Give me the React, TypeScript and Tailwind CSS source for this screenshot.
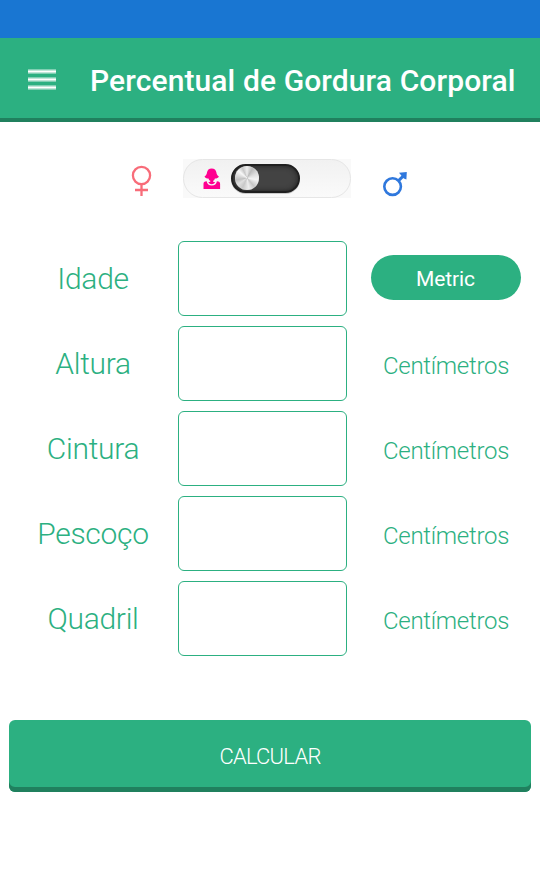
const rows = [
  { label: "Idade", unit: null },
  { label: "Altura", unit: "Centímetros" },
  { label: "Cintura", unit: "Centímetros" },
  { label: "Pescoço", unit: "Centímetros" },
  { label: "Quadril", unit: "Centímetros" },
];

function MenuIcon() {
  return (
    <svg className="mt-[4px]" width="28" height="22" viewBox="0 0 28 22" fill="#fff" shapeRendering="crispEdges">
      {[0, 8, 16].map((y) => (
        <g key={y}>
          <rect y={y} width="28" height="1" opacity="0.4" />
          <rect y={y + 1} width="28" height="3" opacity="0.7" />
          <rect y={y + 2} width="28" height="1" />
          <rect y={y + 4} width="28" height="1" opacity="0.4" />
        </g>
      ))}
    </svg>
  );
}

function Female() {
  return (
    <svg width="22" height="32" viewBox="0 0 22 32" fill="none" stroke="#f86c79" strokeWidth="2.3">
      <circle cx="10.5" cy="10.5" r="8.6" />
      <path d="M10.5 19v12M4 25h13" />
    </svg>
  );
}

function Male() {
  return (
    <svg width="26" height="26" viewBox="0 0 26 26" fill="none" stroke="#2f78dd" strokeWidth="2.6">
      <circle cx="9.6" cy="15.6" r="8.3" />
      <path d="M15.6 9.6L21 4.2" strokeWidth="3" />
      <path d="M16 1.800L23.800 1L23.400 8.500L20.800 7.500L18.300 4.500Z" fill="#2f78dd" stroke="none" />
    </svg>
  );
}

function Woman() {
  return (
    <svg width="18" height="22" viewBox="0 0 18 22" fill="#ff0090">
      <path d="M8.700.400C6 .400 4.300 2 4 4.500 3.800 6.300 3 7.500 1.500 8.400c.8 1.500 2.300 2.100 4 2 .3 1.200.9 1.900 1.800 2.400v.9l-2 .6c.8 1.300 2 1.900 3.400 1.900s2.700-.6 3.500-1.900l-2.100-.6v-.9c.9-.5 1.500-1.200 1.800-2.400 1.600.1 3.200-.5 4-2-1.500-.9-2.300-2.100-2.500-3.900C13.100 2 11.400.400 8.700.400Z" />
      <path d="M.500 21v-5.200c0-1.500.9-2.300 3.200-2.500.3 2.700 2.300 4.300 5.100 4.300s4.800-1.600 5.100-4.300c2.300.2 3.200 1 3.200 2.500V21Z" />
    </svg>
  );
}

function GenderSwitch() {
  return (
    <div className="h-[39px] w-[168px] bg-[#f9f9f9]">
      <div className="flex h-full w-full items-center rounded-full border border-[#e6e6e6] bg-linear-to-b from-[#f1f1f1] to-[#fafafa] pl-[19px]">
        <Woman />
        <div className="mb-px ml-[10px] flex h-[29px] w-[69px] items-center rounded-full border-2 border-[#202020] bg-[#434343] pl-[2px] shadow-[inset_0_0_5px_#222,0_1px_0_#ccc]">
          <div className="size-[24px] rounded-full bg-[conic-gradient(#eee,#bbb_30deg,#ddd_65deg,#f4f4f4_100deg,#c4c4c4_140deg,#eee_170deg,#c8c8c8_205deg,#e0e0e0_235deg,#c0c0c0_260deg,#f8f8f8_310deg,#c8c8c8_335deg,#eee)] shadow-[inset_0_0_1px_#fff]" />
        </div>
      </div>
    </div>
  );
}

export default function App() {
  return (
    <div className="flex h-[877px] w-[540px] flex-col bg-white font-['Roboto',sans-serif] text-[#2cb081]">
      <div className="h-[38px] bg-[#1976d2]" />
      <header className="flex h-[84px] items-center border-b-4 border-[#20805e] bg-[#2cb081] pl-7 text-white">
        <MenuIcon />
        <h1 className="ml-[34px] pt-[5px] text-[30px] leading-10 font-medium tracking-[0.11px] whitespace-nowrap">Percentual de Gordura Corporal</h1>
      </header>
      <div className="flex h-[119px] items-start pt-[37px] pl-[131px]">
        <div className="w-[52px] pt-[6px]"><Female /></div>
        <GenderSwitch />
        <div className="pt-[12px] pl-[32px]"><Male /></div>
      </div>
      <main className="flex flex-col gap-[10px]">
        {rows.map((row) => (
          <div key={row.label} className="flex h-[75px] items-center">
            <label htmlFor={row.label} className="w-[178px] pl-[8px] text-[30px] leading-9 font-light tracking-[-0.3px]">
              <span className="block w-[170px] text-center">{row.label}</span>
            </label>
            <input id={row.label} className="h-[75px] w-[169px] rounded-[6px] border border-[#2cb081] bg-white px-3 text-3xl outline-none" />
            {row.unit ? (
              <span className="ml-[24px] w-[150px] pt-[5px] text-center text-2xl font-light tracking-[-0.28px]">{row.unit}</span>
            ) : (
              <button className="mb-[2px] ml-[24px] h-[45px] w-[150px] rounded-full bg-[#2cb081] pt-[4px] pr-px text-[21px] tracking-[-0.1px] text-white">Metric</button>
            )}
          </div>
        ))}
      </main>
      <button className="mx-[9px] mt-[64px] h-[72px] rounded-[6px] bg-[#2cb081] pt-[1px] text-[22px] font-light tracking-[-0.75px] text-white shadow-[inset_0_-5px_0_#20805e]">CALCULAR</button>
    </div>
  );
}
